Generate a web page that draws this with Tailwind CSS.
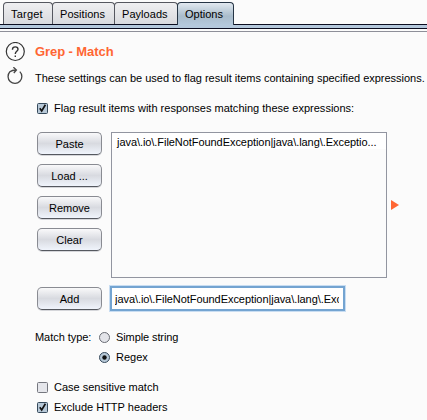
<!DOCTYPE html>
<html lang="en">
<head>
<meta charset="utf-8">
<title>Grep - Match</title>
<script src="https://cdn.jsdelivr.net/npm/@tailwindcss/browser@4"></script>
</head>
<body class="w-[427px] h-[420px] overflow-hidden bg-[#fbfbfb] text-black text-[11px] leading-[14px] font-['Liberation_Sans',Arial,sans-serif] whitespace-nowrap">
<nav class="flex h-6 pt-[2px] pl-[3px]">
  <div class="w-[50px] h-[22px] -mr-px rounded-t-[4px] border border-b-0 border-[#55575f] bg-linear-to-b from-[#efeff1] to-[#d9dade] pl-[7px] pt-[4px] tracking-[0.2px]">Target</div>
  <div class="w-[63px] h-[22px] -mr-px rounded-t-[4px] border border-b-0 border-[#55575f] bg-linear-to-b from-[#efeff1] to-[#d9dade] pl-[7px] pt-[4px] tracking-[0.05px]">Positions</div>
  <div class="w-[64px] h-[22px] -mr-px rounded-t-[4px] border border-b-0 border-[#55575f] bg-linear-to-b from-[#efeff1] to-[#d9dade] pl-[7px] pt-[4px] tracking-[0.05px]">Payloads</div>
  <div class="relative z-10 w-[57px] h-[23px] rounded-t-[4px] border border-b-0 border-[#263545] bg-linear-to-b from-[#e2e9f0] via-[#a9bccb] via-60% to-[#b4c8dc] pl-[7px] pt-[4px]">Options</div>
</nav>
<div class="h-[5px] border-y border-[#0b0d20] bg-[#b4c8dc]"></div>
<main class="mt-[2px] border-t border-[#8e8f99] pt-[9px]">
  <header class="flex h-[22px] items-center">
    <svg class="ml-[5px] w-5 h-5 shrink-0" viewBox="0 0 20 20" fill="none" stroke="#333"><circle cx="10.3" cy="9.5" r="9" stroke-width="1.2"/><path d="M7.5 7.7V7.3C7.5 5.8 8.7 4.9 10.3 4.9S13 5.8 13 7.2C13 9.3 10.3 9.4 10.3 12M10.3 13.5v1.6" stroke-width="1.4"/></svg>
    <h1 class="ml-[10px] text-[13px] leading-4 font-bold tracking-[-0.08px] text-[#ff6633]">Grep - Match</h1>
  </header>
  <div class="flex h-[30px] items-center">
    <svg class="ml-[7px] -mt-[5px] w-4 h-[18px] shrink-0" viewBox="0 0 16 18" fill="none" stroke="#444" stroke-width="1.3"><path d="M12.8 4.6A6.9 6.9 0 1 1 2.9 4.8Q5 3 9 3"/><path d="M6.4 .2L9.4 3 6.8 6"/></svg>
    <p class="ml-3 tracking-[-0.02px]">These settings can be used to flag result items containing specified expressions.</p>
  </div>
  <label class="flex h-[30px] items-center pl-[37px]">
    <svg class="w-[11px] h-[11px]" viewBox="0 0 11 11"><rect x=".5" y=".5" width="10" height="10" rx="1" fill="#b7c8d7" stroke="#35495b"/><path d="M2.8 5.2L4.7 8 8.4 1.8" fill="none" stroke="#111" stroke-width="1.7"/></svg>
    <span class="ml-[6px] tracking-[0.01px]">Flag result items with responses matching these expressions:</span>
  </label>
  <section class="mt-[9px] flex h-[146px] pl-[37px]">
    <div class="flex w-[65px] flex-col gap-[9px]">
      <button class="h-[23px] rounded-[5px] border border-[#898b92] border-b-[#55585f] bg-linear-to-b from-[#f9f9fa] via-[#d8dae0] to-[#f0f4fc] shadow-[0_1px_0_#d5d6da]">Paste</button>
      <button class="h-[23px] rounded-[5px] border border-[#898b92] border-b-[#55585f] bg-linear-to-b from-[#f9f9fa] via-[#d8dae0] to-[#f0f4fc] shadow-[0_1px_0_#d5d6da]">Load ...</button>
      <button class="h-[23px] rounded-[5px] border border-[#898b92] border-b-[#55585f] bg-linear-to-b from-[#f9f9fa] via-[#d8dae0] to-[#f0f4fc] shadow-[0_1px_0_#d5d6da]">Remove</button>
      <button class="h-[23px] rounded-[5px] border border-[#898b92] border-b-[#55585f] bg-linear-to-b from-[#f9f9fa] via-[#d8dae0] to-[#f0f4fc] shadow-[0_1px_0_#d5d6da]">Clear</button>
    </div>
    <div class="ml-[9px] w-[276px] border border-[#9295a0]"><div class="h-4 bg-white pl-[5px] pt-[2px] tracking-[-0.06px]">java\.io\.FileNotFoundException|java\.lang\.Exceptio...</div></div>
    <svg class="ml-1 mt-[68px] w-2 h-[10px]" viewBox="0 0 8 10"><path d="M0 0L8 5 0 10Z" fill="#ff6633"/></svg>
  </section>
  <section class="mt-2 flex h-[25px] pl-[37px]">
    <button class="mt-px w-[65px] h-[23px] rounded-[5px] border border-[#898b92] border-b-[#55585f] bg-linear-to-b from-[#f9f9fa] via-[#d8dae0] to-[#f0f4fc] shadow-[0_1px_0_#d5d6da]">Add</button>
    <div class="ml-2 w-[235px] border-2 border-[#74a4d1] bg-white pl-[3px] pr-[4px] pt-[4px] tracking-[-0.06px] shadow-[0_0_0_1px_#c8ddf2]"><div class="overflow-hidden">java\.io\.FileNotFoundException|java\.lang\.Exc</div></div>
  </section>
  <section class="mt-4 flex pl-[35px]">
    <div class="w-[64px] pt-[3px] tracking-[-0.05px]">Match type:</div>
    <div>
      <label class="flex h-5 items-center"><svg class="w-[11px] h-[11px]" viewBox="0 0 11 11"><circle cx="5.5" cy="5.5" r="5" fill="#e3e4e9" stroke="#686b73"/></svg><span class="ml-[6px] tracking-[-0.1px]">Simple string</span></label>
      <label class="flex h-5 items-center"><svg class="w-[11px] h-[11px]" viewBox="0 0 11 11"><circle cx="5.5" cy="5.5" r="5" fill="#b7c8d7" stroke="#35495b"/><circle cx="5.5" cy="5.5" r="2.2" fill="#111"/></svg><span class="ml-[6px]">Regex</span></label>
    </div>
  </section>
  <section class="mt-[10px] pl-[37px]">
    <label class="flex h-5 items-center"><svg class="w-[11px] h-[11px]" viewBox="0 0 11 11"><rect x=".5" y=".5" width="10" height="10" rx="1" fill="#e5e6eb" stroke="#75777f"/></svg><span class="ml-[6px]">Case sensitive match</span></label>
    <label class="flex h-5 items-center"><svg class="w-[11px] h-[11px]" viewBox="0 0 11 11"><rect x=".5" y=".5" width="10" height="10" rx="1" fill="#b7c8d7" stroke="#35495b"/><path d="M2.8 5.2L4.7 8 8.4 1.8" fill="none" stroke="#111" stroke-width="1.7"/></svg><span class="ml-[6px]">Exclude HTTP headers</span></label>
  </section>
</main>
</body>
</html>
